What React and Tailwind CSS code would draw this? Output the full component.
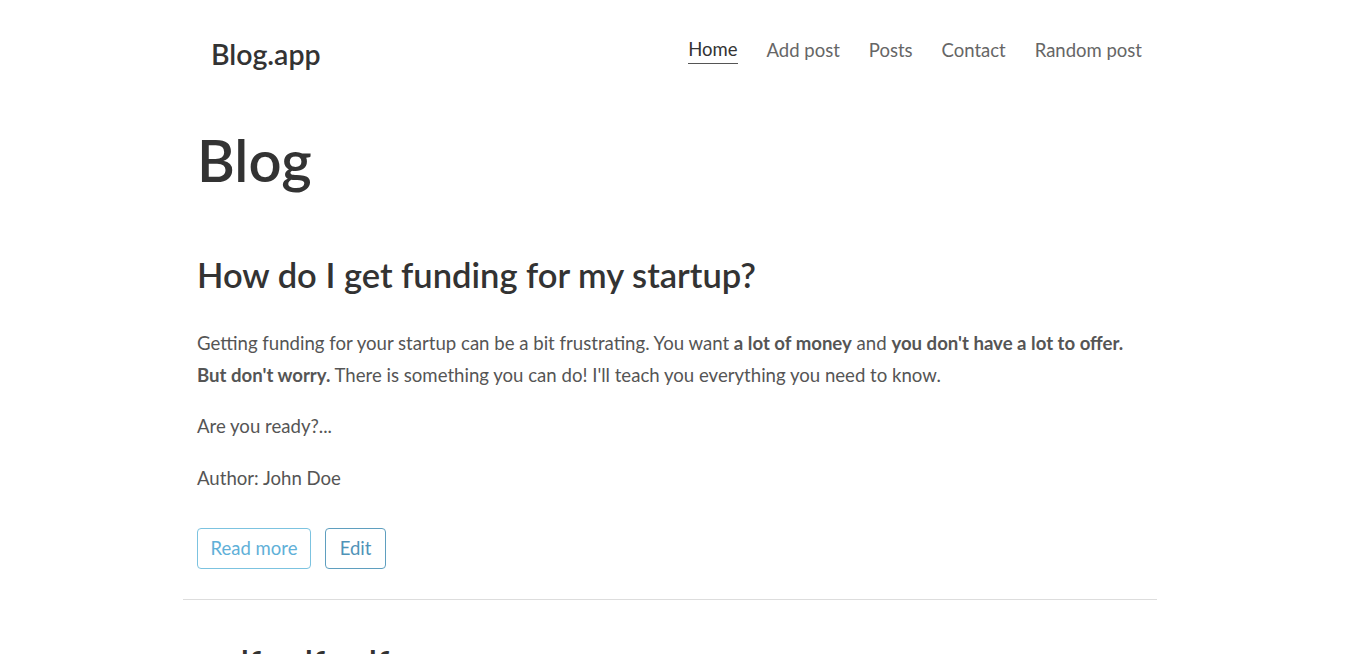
const navLinks = [
  { label: "Home", active: true },
  { label: "Add post" },
  { label: "Posts" },
  { label: "Contact" },
  { label: "Random post" },
];

const font = { fontFamily: "Lato, 'Open Sans', sans-serif" };

export default function App() {
  return (
    <div className="min-h-screen bg-white pl-[183px] pr-[192px] overflow-hidden h-[654px]" style={font}>
      {/* Header */}
      <header className="flex items-start justify-between pl-[28px] pr-[15px] pt-[34px]">
        <a href="#" className="text-[28.5px] font-semibold text-[#333] leading-none mt-[6px]">
          Blog.app
        </a>
        <nav className="flex items-center gap-[29px] mt-[3px]">
          {navLinks.map(({ label, active }) => (
            <a
              key={label}
              href="#"
              className={`text-[18.5px] leading-[24px] pb-[2px] ${
                active ? "text-[#333] border-b border-[#555]" : "text-[#666]"
              }`}
            >
              {label}
            </a>
          ))}
        </nav>
      </header>

      <main className="px-[14px]">
        <h1 className="text-[58px] font-semibold text-[#333] leading-none mt-[62px]">Blog</h1>

        {/* Post */}
        <article className="mt-[69px]">
          <h2 className="text-[34.5px] font-semibold text-[#333] leading-none">
            How do I get funding for my startup?
          </h2>
          <p className="mt-[35px] text-[18.6px] leading-[32px] text-[#555]">
            Getting funding for your startup can be a bit frustrating. You want{" "}
            <strong className="font-bold">a lot of money</strong> and{" "}
            <strong className="font-bold">you don't have a lot to offer. But don't worry.</strong>{" "}
            There is something you can do! I'll teach you everything you need to know.
          </p>
          <p className="mt-[19px] text-[18.6px] leading-[32px] text-[#555]">Are you ready?...</p>
          <p className="mt-[20px] text-[18.6px] leading-[32px] text-[#555]">Author: John Doe</p>
          <div className="flex gap-[14px] mt-[34px]">
            <button className="h-[41px] w-[114px] rounded-[4px] border border-[#7cc3e0] text-[18.5px] text-[#5fb0d8]">
              Read more
            </button>
            <button className="h-[41px] w-[61px] rounded-[4px] border border-[#5f9fbf] text-[18.5px] text-[#4f93b8]">
              Edit
            </button>
          </div>
        </article>
      </main>

      <hr className="mt-[30px] border-t border-[#ddd]" />

      <main className="px-[14px]">
        <h2 className="mt-[46px] text-[34.5px] font-semibold text-[#333] leading-none">
          asdfasdfasdf
        </h2>
      </main>
    </div>
  );
}
